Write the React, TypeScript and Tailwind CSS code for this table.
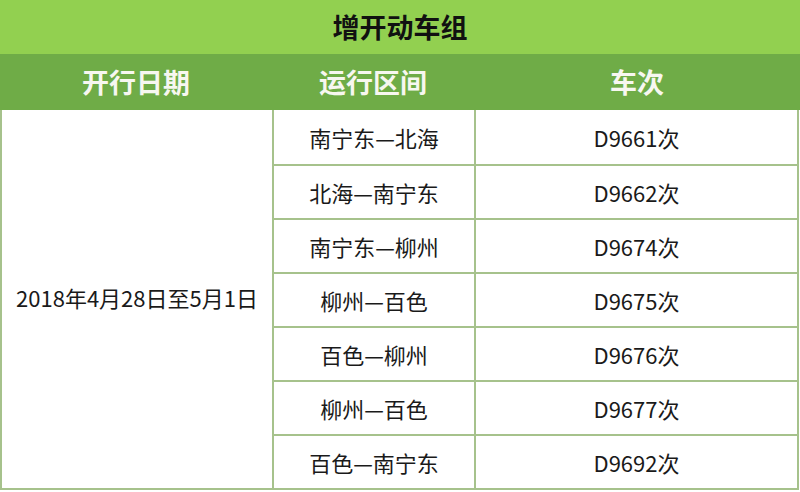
// 增开动车组 — plain schedule table, Excel-style green header bands.

const rows = [
  { route: "南宁东—北海", train: "D9661次" },
  { route: "北海—南宁东", train: "D9662次" },
  { route: "南宁东—柳州", train: "D9674次" },
  { route: "柳州—百色", train: "D9675次" },
  { route: "百色—柳州", train: "D9676次" },
  { route: "柳州—百色", train: "D9677次" },
  { route: "百色—南宁东", train: "D9692次" },
];

const font = { fontFamily: '"Noto Sans CJK SC", "Microsoft YaHei", sans-serif' };

export default function App() {
  return (
    <div className="h-[492px] w-[800px] overflow-hidden bg-white" style={font}>
      <div className="flex h-[54px] items-center justify-center bg-[#92d050] text-[27px] font-bold text-[#111]">
        增开动车组
      </div>
      <div className="grid h-[56px] grid-cols-[272px_202px_1fr] items-center bg-[#6fac47] text-[27px] font-bold text-[#f7f7f0]">
        <div className="text-center">开行日期</div>
        <div className="text-center">运行区间</div>
        <div className="text-center">车次</div>
      </div>
      <div className="grid w-[799px] grid-cols-[272px_202px_1fr] grid-rows-[repeat(7,54px)] border-b-2 border-l-2 border-r-2 border-[#a6c28c] text-[22px] text-[#1a1a1a]">
        <div className="row-span-7 flex items-center justify-center border-r-2 border-[#a6c28c] pb-1">
          2018年4月28日至5月1日
        </div>
        {rows.map((r, i) => (
          <div key={i} className="contents">
            <div
              className={`flex items-center justify-center border-r-2 border-[#a6c28c] ${i > 0 ? "border-t-2" : ""}`}
            >
              {r.route}
            </div>
            <div className={`flex items-center justify-center border-[#a6c28c] ${i > 0 ? "border-t-2" : ""}`}>
              {r.train}
            </div>
          </div>
        ))}
      </div>
    </div>
  );
}
